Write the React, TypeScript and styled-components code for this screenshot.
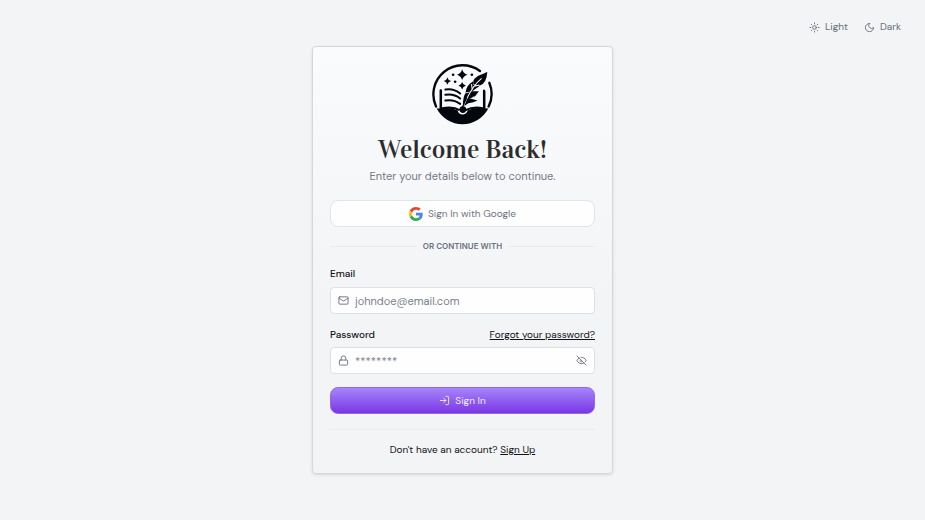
import React, { useState } from "react";
import styled, { createGlobalStyle } from "styled-components";

const GlobalStyle = createGlobalStyle`
  *, *::before, *::after { box-sizing: border-box; }
  body {
    margin: 0;
    background: #f3f4f6;
    color: #111319;
    font-family: "DM Sans", Inter, "Liberation Sans", sans-serif;
    font-size: 10px;
    line-height: 16px;
  }
  button, input { font: inherit; }
  svg { display: block; flex: none; }
`;

const Page = styled.div`
  display: grid;
  grid-template-areas: "page";
  min-height: 100vh;
`;

const ThemeBar = styled.nav`
  grid-area: page;
  align-self: start;
  justify-self: end;
  display: flex;
  gap: 16px;
  padding: 19px 24px;
`;

const ThemeButton = styled.button`
  display: flex;
  align-items: center;
  gap: 5px;
  padding: 0;
  border: 0;
  background: none;
  color: #686e7a;
  cursor: pointer;
`;

const Card = styled.main`
  grid-area: page;
  place-self: center;
  width: 301px;
  max-width: 100%;
  padding: 17px 17px 15px;
  border: 1px solid #d5d7da;
  border-radius: 4px;
  background: linear-gradient(#fafbfc, #f3f4f6 60%);
  box-shadow: 0 1px 3px rgba(0, 0, 0, 0.12);
`;

const Intro = styled.header`
  display: flex;
  flex-direction: column;
  align-items: center;
  text-align: center;
`;

const Title = styled.h1`
  margin: 9px 0 0;
  color: #2c2c2e;
  font: 400 26px/32px Vidaloka, "Playfair Display", "Liberation Serif", serif;
`;

const Subtitle = styled.p`
  margin: 2px 0 0;
  color: #747985;
  font-size: 11px;
`;

const ActionButton = styled.button<{ $primary?: boolean }>`
  display: flex;
  align-items: center;
  justify-content: center;
  gap: 5px;
  width: 100%;
  height: 27px;
  padding: 0;
  border: 1px solid ${(p) => (p.$primary ? "#9167ed" : "#e2e4e9")};
  border-radius: 8px;
  background: ${(p) => (p.$primary ? "linear-gradient(#a685f9, #7a36e6)" : "#fefefe")};
  color: ${(p) => (p.$primary ? "#f3edff" : "#707581")};
  cursor: pointer;
`;

const GoogleButton = styled(ActionButton)`
  margin-top: 16px;
`;

const Divider = styled.div`
  display: flex;
  align-items: center;
  gap: 6px;
  margin: 11px 0 12px;
  color: #6c7280;
  font: 600 8px/16px "Inter", sans-serif;
  &::before, &::after {
    content: "";
    flex: 1;
    height: 1px;
    background: #e8eaed;
  }
`;

const Form = styled.form`
  display: flex;
  flex-direction: column;
  gap: 13px;
`;

const Field = styled.div<{ $gap?: number }>`
  display: flex;
  flex-direction: column;
  gap: ${(p) => p.$gap ?? 4}px;
`;

const LabelRow = styled.div`
  display: flex;
  justify-content: space-between;
`;

const Label = styled.label`
  font-weight: 500;
`;

const TextLink = styled.a`
  color: inherit;
  text-decoration: underline;
  text-underline-offset: 1px;
`;

const InputShell = styled.div`
  display: flex;
  align-items: center;
  gap: 6px;
  height: 27px;
  padding: 0 7px;
  border: 1px solid #dde0e5;
  border-radius: 4px;
  background: #fefefe;
  color: #6c7280;
`;

const TextInput = styled.input`
  flex: 1;
  min-width: 0;
  padding: 0;
  border: 0;
  outline: 0;
  background: none;
  color: #111319;
  font-size: 11px;
  &::placeholder { color: #7b808b; opacity: 1; }
`;

const IconButton = styled.button`
  padding: 0;
  border: 0;
  background: none;
  color: inherit;
  cursor: pointer;
`;

const Footer = styled.footer`
  margin-top: 15px;
  padding-top: 12px;
  border-top: 1px solid #e9ebee;
  text-align: center;
`;

const Icon = ({ size = 11, children }: { size?: number; children: React.ReactNode }) => (
  <svg width={size} height={size} viewBox="0 0 24 24" fill="none" stroke="currentColor"
    strokeWidth="2" strokeLinecap="round" strokeLinejoin="round" aria-hidden="true">
    {children}
  </svg>
);

const GoogleMark = () => (
  <svg width="14" height="14" viewBox="0 0 48 48" aria-hidden="true">
    <path fill="#EA4335" d="M24 9.5c3.54 0 6.71 1.22 9.21 3.6l6.85-6.85C35.9 2.38 30.47 0 24 0 14.62 0 6.51 5.38 2.56 13.22l7.98 6.19C12.43 13.72 17.74 9.5 24 9.5z" />
    <path fill="#4285F4" d="M46.98 24.55c0-1.57-.15-3.09-.38-4.55H24v9.02h12.94c-.58 2.96-2.26 5.48-4.78 7.18l7.73 6c4.51-4.18 7.09-10.36 7.09-17.65z" />
    <path fill="#FBBC05" d="M10.53 28.59A14.5 14.5 0 0 1 9.77 24c0-1.6.27-3.14.76-4.59l-7.98-6.19A24 24 0 0 0 0 24c0 3.87.92 7.53 2.56 10.78z" />
    <path fill="#34A853" d="M24 48c6.48 0 11.93-2.13 15.89-5.81l-7.73-6c-2.15 1.45-4.92 2.3-8.16 2.3-6.26 0-11.57-4.22-13.47-9.91l-7.98 6.19C6.51 42.62 14.62 48 24 48z" />
  </svg>
);

const star = (x: number, y: number, r: number) => {
  const k = r / 5;
  return `M${x} ${y - r}Q${x + k} ${y - k} ${x + r} ${y}Q${x + k} ${y + k} ${x} ${y + r}Q${x - k} ${y + k} ${x - r} ${y}Q${x - k} ${y - k} ${x} ${y - r}Z`;
};

const Logo = () => (
  <svg width="61" height="61" viewBox="31 22 182 182" role="img" aria-label="Open book and quill">
    <g fill="none" stroke="#05070f" strokeWidth="7" strokeLinecap="round">
      <path d="M43 149A87 87 0 0 1 174 43" />
      <path d="M202 78A87 87 0 0 1 200 149" />
      <path d="M57 101V154M187 104V154" />
      <path strokeWidth="6" d="M71 98Q96 94 115 110M71 114Q96 110 115 125M71 131Q96 127 115 141" />
    </g>
    <g fill="#05070f">
      <path d="M45 155L60 154Q88 151 107 160Q111 173 122 173Q133 173 138 160Q157 151 184 154L199 155A87 87 0 0 1 45 155Z" />
      <path d="M55 99H61V151Q94 144 115 157L112 162Q93 151 55 158Z" />
      <path d="M189 99H183V151Q154 145 130 157L133 162Q151 151 189 158Z" />
      <circle cx="123" cy="158" r="10" />
      <path d={star(121, 54, 16) + star(77, 73, 11) + star(121, 87, 11)} />
      <circle cx="94" cy="54" r="4" /><circle cx="100" cy="75" r="4" /><circle cx="150" cy="54" r="4" />
      <path d="M196 46C180 53 164 57 156 69Q151 79 157 83L174 86Q194 80 196 46Z" />
      <path d="M153 74Q134 84 131 107L151 103L173 88L155 85Z" />
      <path d="M149 105L130 110Q124 121 123 143L142 126L153 121Z" />
      <path d="M145 103L171 103L159 119L139 121ZM137 123L167 131Q151 139 141 138L127 147Z" />
    </g>
    <path fill="none" stroke="#f9fafb" strokeWidth="3" d="M179 65Q152 86 129 138M149 82L151 100M154 89L172 85" />
    <path fill="none" stroke="#05070f" strokeWidth="4" strokeLinecap="round" d="M134 124Q127 137 122 152" />
  </svg>
);

export default function App() {
  const [visible, setVisible] = useState(false);
  return (
    <>
      <GlobalStyle />
      <Page>
        <ThemeBar aria-label="Theme">
          <ThemeButton type="button">
            <Icon><circle cx="12" cy="12" r="4" /><path d="M12 2v2M12 20v2M4.9 4.9l1.4 1.4M17.7 17.7l1.4 1.4M2 12h2M20 12h2M6.3 17.7l-1.4 1.4M19.1 4.9l-1.4 1.4" /></Icon>
            Light
          </ThemeButton>
          <ThemeButton type="button">
            <Icon><path d="M12 3a6 6 0 0 0 9 9 9 9 0 1 1-9-9Z" /></Icon>
            Dark
          </ThemeButton>
        </ThemeBar>
        <Card>
          <Intro>
            <Logo />
            <Title>Welcome Back!</Title>
            <Subtitle>Enter your details below to continue.</Subtitle>
          </Intro>
          <GoogleButton type="button"><GoogleMark />Sign In with Google</GoogleButton>
          <Divider>OR CONTINUE WITH</Divider>
          <Form onSubmit={(e) => e.preventDefault()}>
            <Field $gap={5}>
              <Label htmlFor="email">Email</Label>
              <InputShell>
                <Icon><rect x="2" y="4" width="20" height="16" rx="2" /><path d="m22 7-8.97 5.7a1.94 1.94 0 0 1-2.06 0L2 7" /></Icon>
                <TextInput id="email" type="email" placeholder="johndoe@email.com" />
              </InputShell>
            </Field>
            <Field>
              <LabelRow>
                <Label htmlFor="password">Password</Label>
                <TextLink href="#forgot">Forgot your password?</TextLink>
              </LabelRow>
              <InputShell>
                <Icon><rect x="3" y="11" width="18" height="11" rx="2" /><path d="M7 11V7a5 5 0 0 1 10 0v4" /></Icon>
                <TextInput id="password" type={visible ? "text" : "password"} placeholder="********" />
                <IconButton type="button" aria-label="Show password" onClick={() => setVisible(!visible)}>
                  <Icon><path d="M9.88 9.88a3 3 0 1 0 4.24 4.24M10.73 5.08A10.43 10.43 0 0 1 12 5c7 0 10 7 10 7a13.16 13.16 0 0 1-1.67 2.68M6.61 6.61A13.526 13.526 0 0 0 2 12s3 7 10 7a9.74 9.74 0 0 0 5.39-1.61M2 2l20 20" /></Icon>
                </IconButton>
              </InputShell>
            </Field>
            <ActionButton type="submit" $primary>
              <Icon><path d="M15 3h4a2 2 0 0 1 2 2v14a2 2 0 0 1-2 2h-4M10 17l5-5-5-5M15 12H3" /></Icon>
              Sign In
            </ActionButton>
          </Form>
          <Footer>Don't have an account? <TextLink href="#signup">Sign Up</TextLink></Footer>
        </Card>
      </Page>
    </>
  );
}
